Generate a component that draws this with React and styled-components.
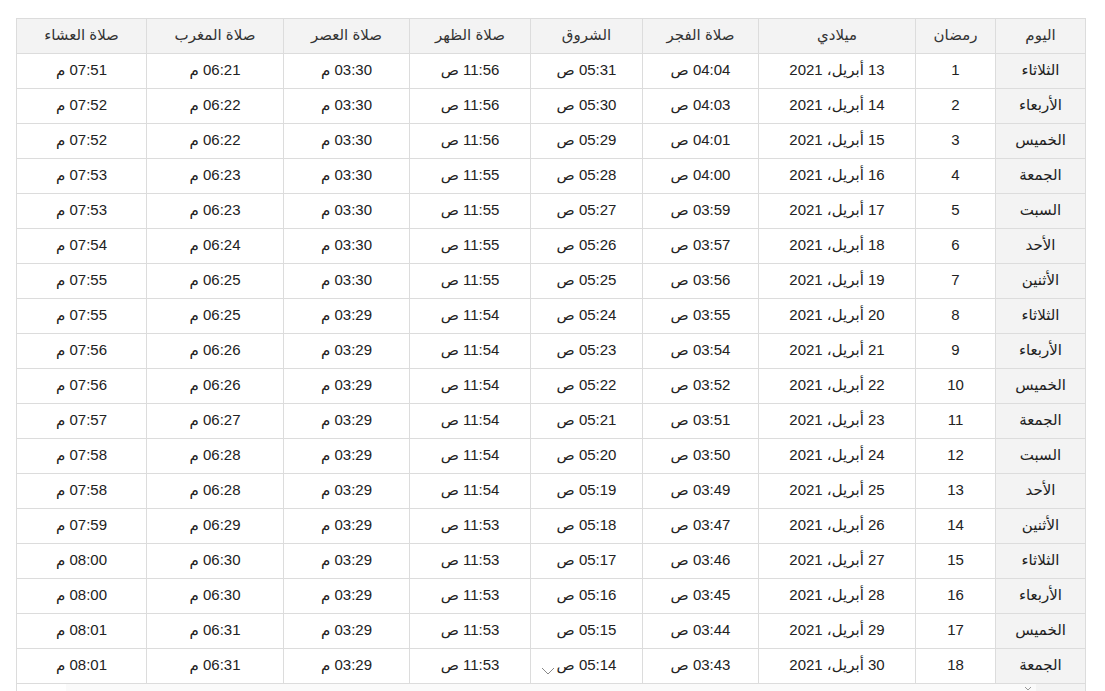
import styled, { createGlobalStyle } from "styled-components"

const GlobalStyle = createGlobalStyle`
    html, body {
        margin: 0;
        padding: 0;
        background: #fff;
        overflow: hidden;
    }
    body {
        font-family: "Liberation Sans", "DejaVu Sans", Arial, sans-serif;
        color: #333;
    }
`

const days = ["الثلاثاء", "الأربعاء", "الخميس", "الجمعة", "السبت", "الأحد", "الأثنين"]
const fajr = ["04:04", "04:03", "04:01", "04:00", "03:59", "03:57", "03:56", "03:55", "03:54", "03:52", "03:51", "03:50", "03:49", "03:47", "03:46", "03:45", "03:44", "03:43"]
const maghrib = ["06:21", "06:22", "06:22", "06:23", "06:23", "06:24", "06:25", "06:25", "06:26", "06:26", "06:27", "06:28", "06:28", "06:29", "06:30", "06:30", "06:31", "06:31"]
const isha = ["07:51", "07:52", "07:52", "07:53", "07:53", "07:54", "07:55", "07:55", "07:56", "07:56", "07:57", "07:58", "07:58", "07:59", "08:00", "08:00", "08:01", "08:01"]

// builds the 18 rows of the month table
const rows = fajr.map((f, i) => {
    const n = i + 1
    const dhuhr = n <= 3 ? "11:56" : n <= 7 ? "11:55" : n <= 13 ? "11:54" : "11:53"
    return {
        day: days[i % 7],
        ramadan: n,
        date: `${12 + n} أبريل، 2021`,
        fajr: `${f} ص`,
        sunrise: `05:${String(32 - n).padStart(2, "0")} ص`,
        dhuhr: `${dhuhr} ص`,
        asr: n <= 7 ? "03:30 م" : "03:29 م",
        maghrib: `${maghrib[i]} م`,
        isha: `${isha[i]} م`,
    }
})

const headers = ["اليوم", "رمضان", "ميلادي", "صلاة الفجر", "الشروق", "صلاة الظهر", "صلاة العصر", "صلاة المغرب", "صلاة العشاء"]
const widths = [90, 80, 157, 116, 112, 121, 126, 137, 130]

const App = () => {
    return <>
        <GlobalStyle />
        <Page>
            <Table dir="rtl">
                <colgroup>
                    {widths.map((w, i) => <col key={i} style={{ width: w }} />)}
                </colgroup>
                <thead>
                    <tr>
                        {headers.map(h => <Th key={h}>{h}</Th>)}
                    </tr>
                </thead>
                <tbody>
                    {rows.map(r => <tr key={r.ramadan}>
                        <Td $shaded>{r.day}</Td>
                        <Td>{r.ramadan}</Td>
                        <Td>{r.date}</Td>
                        <Td>{r.fajr}</Td>
                        <Td>{r.sunrise}</Td>
                        <Td>{r.dhuhr}</Td>
                        <Td>{r.asr}</Td>
                        <Td>{r.maghrib}</Td>
                        <Td>{r.isha}</Td>
                    </tr>)}
                    <tr>
                        <Td $shaded></Td>
                        {widths.slice(1).map((w, i) => <Td key={i}></Td>)}
                    </tr>
                </tbody>
            </Table>
            <ScrollHint>
                <Chevron width="8" height="5" viewBox="0 0 8 5" style={{ right: 4, top: 2 }}>
                    <path d="M1 1 L4 4 L7 1" fill="none" stroke="#999" strokeWidth="1" />
                </Chevron>
            </ScrollHint>
            <Chevron width="14" height="8" viewBox="0 0 14 8" style={{ left: 541, top: 667 }}>
                <path d="M1 1 L7 7 L13 1" fill="none" stroke="#888" strokeWidth="1" />
            </Chevron>
        </Page>
    </>
}

const Page = styled.div`
    position: relative;
    height: 691px;
    padding: 18px 20px 0 16px;
    box-sizing: border-box;
`
const Table = styled.table`
    width: 1069px;
    table-layout: fixed;
    border-collapse: collapse;
    font-size: 15px;
`
const Th = styled.th`
    height: 31px;
    padding: 0 6px 3px;
    background: #f3f3f3;
    border: 1px solid #dcdcdc;
    font-weight: normal;
    color: #333;
    text-align: center;
    vertical-align: middle;
    white-space: nowrap;
`
const Td = styled.td`
    height: 31px;
    padding: 0 6px 3px;
    background: ${p => p.$shaded ? "#f3f3f3" : "#fff"};
    border: 1px solid #dcdcdc;
    color: #222;
    text-align: center;
    vertical-align: middle;
    white-space: nowrap;
`
const ScrollHint = styled.div`
    position: absolute;
    left: 66px;
    top: 684px;
    width: 970px;
    height: 10px;
    background: #fafafa;
`
const Chevron = styled.svg`
    position: absolute;
`

export default App
